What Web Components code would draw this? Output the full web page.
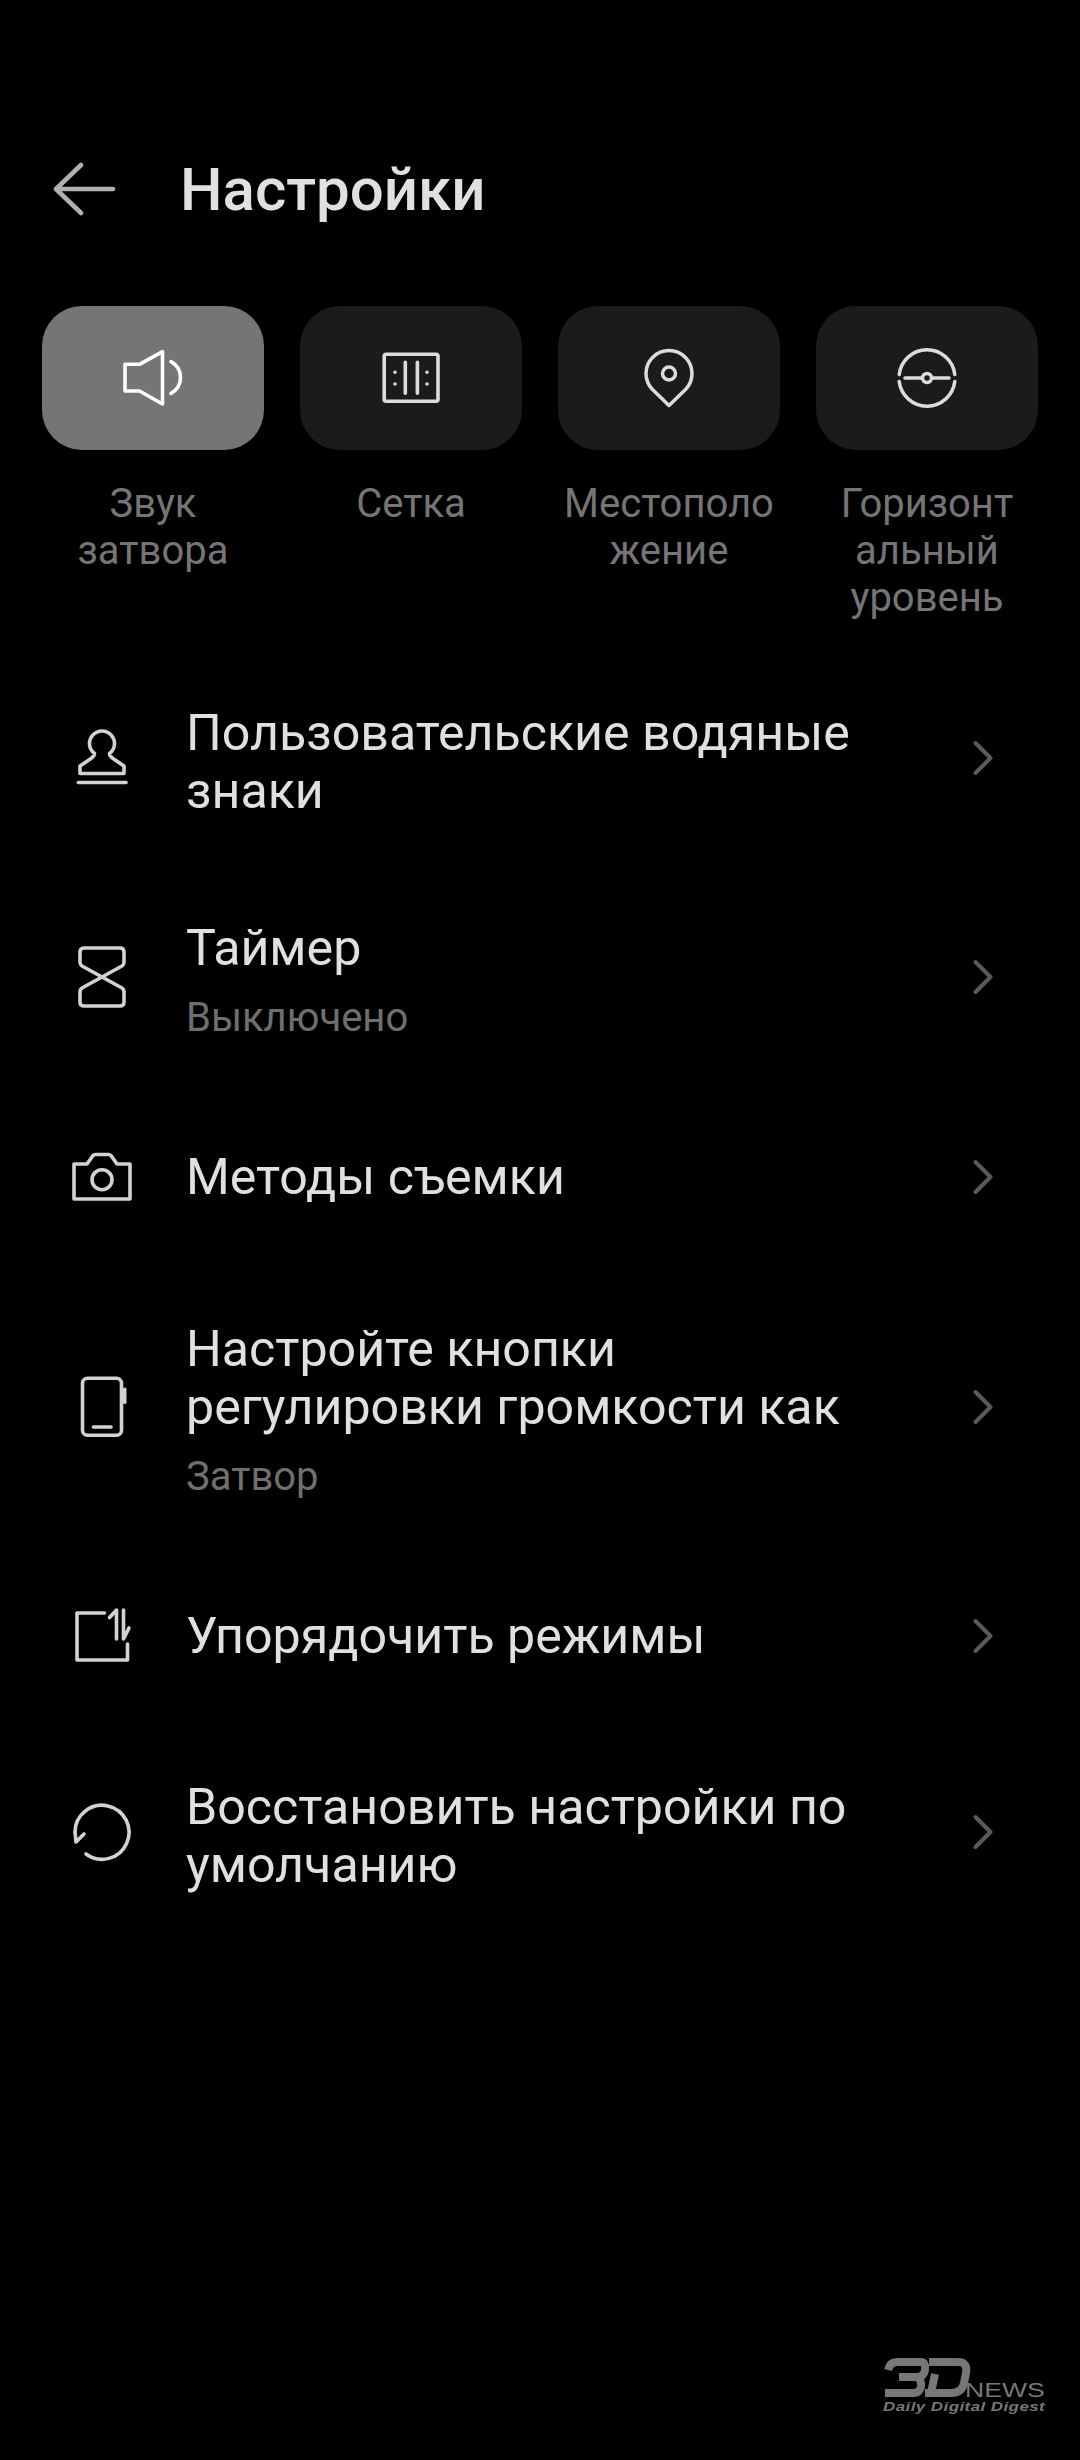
<!DOCTYPE html>
<html lang="ru">
<head>
<meta charset="utf-8">
<title>Настройки</title>
<style>
  html, body { margin: 0; background: #000; }
  body { font-family: Roboto, "Noto Sans", sans-serif; }
</style>
</head>
<body>
<settings-screen>
  <screen-header>Настройки</screen-header>
  <tile-grid>
    <quick-tile icon="sound" active>Звук<br>затвора</quick-tile>
    <quick-tile icon="grid">Сетка</quick-tile>
    <quick-tile icon="pin">Местополо<br>жение</quick-tile>
    <quick-tile icon="level">Горизонт<br>альный<br>уровень</quick-tile>
  </tile-grid>
  <settings-row icon="stamp" wrapped>Пользовательские водяные знаки</settings-row>
  <settings-row icon="timer" sub="Выключено">Таймер</settings-row>
  <settings-row icon="camera">Методы съемки</settings-row>
  <settings-row icon="phone" sub="Затвор">Настройте кнопки регулировки громкости как</settings-row>
  <settings-row icon="reorder">Упорядочить режимы</settings-row>
  <settings-row icon="restore" wrapped>Восстановить настройки по умолчанию</settings-row>
  <news-watermark></news-watermark>
</settings-screen>

<script>
  // All icons share a 72x72 box
  const ICONS = {
    sound: `<path d="M8 22.3H22.5L45.5 9.7V62L22.5 49H8Z"/><path d="M54 19.7C60 23 63.5 29 63.5 35.5S60 48 54 51.3"/>`,
    grid: `<rect x="9.2" y="12.3" width="53.8" height="47" rx="2"/><path d="M30.3 20.3V51.3M42.4 20.3V51.3"/><path d="M20 30.3h.01M20 42h.01M52 30.3h.01M52 42h.01"/>`,
    pin: `<path stroke-width="3.5" d="M36 63.5L19.5 47.5A23 23 0 1 1 52.5 47.5Z"/><circle stroke-width="3.5" cx="36" cy="31.5" r="6.5"/>`,
    level: `<path stroke-width="3.5" d="M8.2 32.5A28 28 0 0 1 63.8 32.5M8.2 39.5A28 28 0 0 0 63.8 39.5M14 36H31.5M40.5 36H58"/><circle stroke-width="3.5" cx="36" cy="36" r="4.5"/>`,
    stamp: `<path d="M28.5 31.5A12.5 12.5 0 1 1 43.5 31.5C43.5 34 45 35 47 36.5L58 44V51.5H14V44L25 36.5C27 35 28.5 34 28.5 31.5Z"/><path d="M12.3 60.5H60"/>`,
    timer: `<path d="M36 36L16 25C14.5 24 14 23 14 21V11Q14 7 18 7H54Q58 7 58 11V21C58 23 57.5 24 56 25L16 47C14.5 48 14 49 14 51V61Q14 65 18 65H54Q58 65 58 61V51C58 49 57.5 48 56 47Z"/>`,
    camera: `<path d="M8 23H21L27 14.5Q28 13.5 29.5 13.5H42.5Q44 13.5 45 14.5L51 23H64V58H8Z"/><circle cx="36" cy="38.7" r="10"/>`,
    phone: `<rect x="16.5" y="7.3" width="39" height="57" rx="5"/><path d="M58.7 18.2V31.3"/><path d="M27.5 56H45"/>`,
    reorder: `<path d="M38.5 13H11V60H61.5V44"/><path d="M50.5 39V10L43.5 17.5"/><path d="M57.5 10V39L63 28"/>`,
    restore: `<path d="M20 58A27 27 0 1 0 9 36"/><path d="M9 36L10 46L18 38"/>`
  };

  function iconSvg(name) {
    return `<svg viewBox="0 0 72 72" width="72" height="72" fill="none" stroke="currentColor"
      stroke-width="3.6" stroke-linejoin="round" stroke-linecap="round" aria-hidden="true">${ICONS[name]}</svg>`;
  }

  class SettingsScreen extends HTMLElement {
    constructor() {
      super();
      this.attachShadow({ mode: 'open' });
      this.shadowRoot.innerHTML = `
        <style>
          :host {
            display: block;
            position: relative;
            height: 2460px;
            background: #000;
            overflow: hidden;
          }
        </style>
        <slot></slot>
      `;
    }
  }

  class ScreenHeader extends HTMLElement {
    constructor() {
      super();
      this.attachShadow({ mode: 'open' });
      this.shadowRoot.innerHTML = `
        <style>
          :host {
            display: flex;
            align-items: center;
            height: 120px;
            padding: 129px 0 0 52px;
            color: #e0e0e0;
            font: 500 60px/120px Roboto, sans-serif;
          }
          .title { padding-top: 2px; }
          svg { width: 64px; height: 54px; margin-right: 64px; color: #b0b0b0; }
        </style>
        <svg viewBox="0 0 64 54" fill="none" stroke="currentColor" stroke-width="4.6"
          stroke-linecap="round" stroke-linejoin="round" aria-hidden="true">
          <path d="M61 27H4M29 3L4 27L29 51"/>
        </svg>
        <span class="title"><slot></slot></span>
      `;
    }
  }

  class TileGrid extends HTMLElement {
    constructor() {
      super();
      this.attachShadow({ mode: 'open' });
      this.shadowRoot.innerHTML = `
        <style>
          :host {
            display: grid;
            grid-template-columns: repeat(4, 222px);
            column-gap: 36px;
            align-items: start;
            padding: 57px 0 30px 42px;
          }
        </style>
        <slot></slot>
      `;
    }
  }

  class QuickTile extends HTMLElement {
    constructor() {
      super();
      this.attachShadow({ mode: 'open' });
    }

    connectedCallback() {
      const active = this.hasAttribute('active');
      this.shadowRoot.innerHTML = `
        <style>
          :host {
            display: block;
            text-align: center;
            color: #757575;
            font: 400 40px/47px Roboto, sans-serif;
          }
          .tile {
            height: 144px;
            border-radius: 40px;
            display: flex;
            align-items: center;
            justify-content: center;
            background: ${active ? '#757575' : '#1b1b1b'};
            color: ${active ? '#fff' : '#dcdcdc'};
            margin-bottom: 30px;
          }
          svg { display: block; }
        </style>
        <div class="tile">${iconSvg(this.getAttribute('icon'))}</div>
        <slot></slot>
      `;
    }
  }

  class SettingsRow extends HTMLElement {
    constructor() {
      super();
      this.attachShadow({ mode: 'open' });
    }

    connectedCallback() {
      const sub = this.getAttribute('sub');
      this.shadowRoot.innerHTML = `
        <style>
          :host {
            display: grid;
            grid-template-columns: 72px 1fr 20px;
            column-gap: 48px;
            align-items: center;
            box-sizing: border-box;
            min-height: 178px;
            padding: 49px 87px 49px 66px;
            color: #e0e0e0;
            font: 400 50.15px/58px Roboto, sans-serif;
          }
          :host([sub]) { padding-top: 53.5px; padding-bottom: 52.5px; }
          /* two line titles sit a little under the middle of the row */
          :host([wrapped]) { padding-top: 45px; padding-bottom: 45px; }
          :host([wrapped]) .text { padding-top: 8px; }
          .icon { color: #d2d2d2; display: block; }
          .icon svg { display: block; }
          .text { max-width: 690px; }
          .sub {
            color: #6f6f6f;
            font-size: 40px;
            line-height: 36px;
            margin-top: 23px;
          }
          .chev { width: 20px; height: 36px; color: #5a5a5a; }
        </style>
        <span class="icon">${iconSvg(this.getAttribute('icon'))}</span>
        <div class="text">
          <slot></slot>
          ${sub ? `<div class="sub">${sub}</div>` : ''}
        </div>
        <svg class="chev" viewBox="0 0 20 36" fill="none" stroke="currentColor" stroke-width="4"
          stroke-linecap="round" stroke-linejoin="round" aria-hidden="true">
          <path d="M2.5 3L17.5 18L2.5 33"/>
        </svg>
      `;
    }
  }

  class NewsWatermark extends HTMLElement {
    constructor() {
      super();
      this.attachShadow({ mode: 'open' });
      this.shadowRoot.innerHTML = `
        <style>
          :host {
            position: absolute;
            left: 883px;
            top: 2358px;
            width: 165px;
            height: 56px;
            color: #777;
            font-family: "Liberation Sans", sans-serif;
          }
          svg { position: absolute; left: 0; top: 0; }
          .news {
            position: absolute;
            left: 82px;
            top: 22px;
            font-size: 20px;
            line-height: 20px;
            transform: scaleX(1.33);
            transform-origin: 0 50%;
          }
          .tag {
            position: absolute;
            left: 0;
            top: 41px;
            font: italic 700 13px/15px "Liberation Sans", sans-serif;
            letter-spacing: .35px;
            white-space: nowrap;
            transform: scaleX(1.3);
            transform-origin: 0 50%;
          }
        </style>
        <svg width="90" height="40" viewBox="0 0 90 40" fill="none" stroke="currentColor"
          stroke-width="8" stroke-linejoin="round" aria-hidden="true">
          <path d="M5 12Q7 4 14 4H38Q43 4 42 12Q41 19 34 19H16M34 19Q39 22 38 29Q36 35 31 35H2"/>
          <path d="M46 4H75Q85 4 83 15L81 25Q79 35 68 35H42M52 16L48 35"/>
        </svg>
        <span class="news">NEWS</span>
        <span class="tag">Daily Digital Digest</span>
      `;
    }
  }

  customElements.define('settings-screen', SettingsScreen);
  customElements.define('screen-header', ScreenHeader);
  customElements.define('tile-grid', TileGrid);
  customElements.define('quick-tile', QuickTile);
  customElements.define('settings-row', SettingsRow);
  customElements.define('news-watermark', NewsWatermark);
</script>
</body>
</html>
